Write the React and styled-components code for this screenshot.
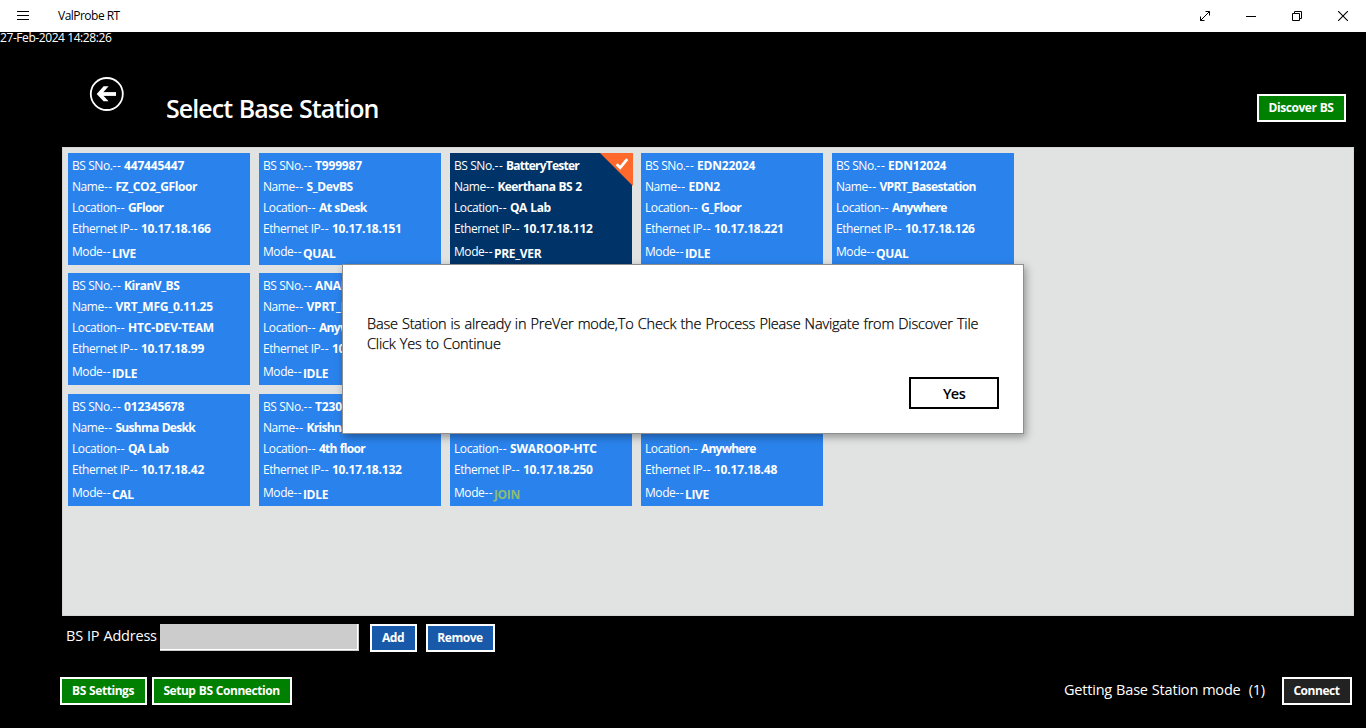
import React from "react";
import styled, { createGlobalStyle } from "styled-components";

const GlobalStyle = createGlobalStyle`
  * { box-sizing: border-box; }
  body {
    margin: 0;
    background: #000;
    color: #fff;
    font-family: "Segoe UI", "Open Sans", "Noto Sans", sans-serif;
    overflow: hidden;
  }
`;

const Window = styled.div`
  position: relative;
  display: flex;
  flex-direction: column;
  width: 1366px;
  height: 728px;
  background: #000;
`;

const TitleBar = styled.header`
  display: flex;
  align-items: center;
  height: 32px;
  padding-left: 17px;
  background: #fff;
  color: #000;
`;

const AppName = styled.span`
  flex: 1;
  margin-left: 29px;
  font-size: 12px;
  line-height: 16px;
  letter-spacing: -0.52px;
`;

const WindowControl = styled.span`
  display: flex;
  justify-content: center;
  align-items: center;
  width: 46px;
  height: 32px;
`;

const Clock = styled.div`
  height: 14px;
  font-size: 12px;
  line-height: 12px;
  letter-spacing: -0.42px;
`;

const PageHeader = styled.div`
  display: flex;
  align-items: flex-start;
  height: 101px;
  padding: 30px 20px 0 89px;
`;

const Title = styled.h1`
  flex: 1;
  margin: 14px 0 0 42px;
  font-size: 25px;
  line-height: 36px;
  font-weight: 600;
  letter-spacing: -0.95px;
  word-spacing: 1px;
`;

const Button = styled.button`
  width: ${(p) => p.$width}px;
  height: 28px;
  margin: 0 0 0 ${(p) => p.$gap || 0}px;
  padding: 0 1px 1px 0;
  border: 2px solid #fff;
  background: ${(p) => p.$color || "#008000"};
  color: #fff;
  font-family: inherit;
  font-size: 12px;
  font-weight: 700;
  line-height: 20px;
  letter-spacing: -0.45px;
  word-spacing: 0.6px;
  white-space: nowrap;
`;

const HeaderButton = styled(Button)`
  margin-top: 18px;
`;

const Panel = styled.main`
  height: 469px;
  margin: 0 12px 0 62px;
  padding: 5px;
  border: 1px solid #d5d7d6;
  background: #e1e3e2;
`;

const TileRow = styled.div`
  display: flex;
  gap: 9px;
  margin-bottom: ${(p) => p.$gap}px;
`;

const Tile = styled.section`
  position: relative;
  width: 182px;
  height: 112px;
  padding: 2px 0 0 4px;
  background: ${(p) => (p.$selected ? "#003469" : "#2a83ec")};
`;

const Field = styled.div`
  height: 21px;
  font-size: 12px;
  line-height: 21px;
  letter-spacing: -0.42px;
  white-space: pre;
`;

const ModeField = styled(Field)`
  display: flex;
  margin-top: 2px;
`;

const Dashes = styled.span`
  letter-spacing: 0.55px;
`;

const Value = styled.b`
  font-weight: 700;
  letter-spacing: ${(p) => p.$spacing}px;
  word-spacing: 0.6px;
`;

const ModeValue = styled(Value)`
  padding: 2px 0 0 0.7px;
  color: ${(p) => (p.$joining ? "#8dbd6e" : "#fff")};
`;

const SelectedMark = styled.svg`
  position: absolute;
  top: 0;
  right: -1px;
`;

const AddressRow = styled.div`
  display: flex;
  height: 61px;
  padding: 8px 0 0 66px;
`;

const Caption = styled.label`
  width: ${(p) => p.$width}px;
  font-size: 14.5px;
  line-height: 24px;
  letter-spacing: -0.2px;
  word-spacing: 0.5px;
  white-space: pre;
`;

const AddressInput = styled.input`
  width: 199px;
  height: 27px;
  border: 1px solid #ccc;
  border-width: 0 1px 1px 0;
  background: #ccc;
  box-shadow: inset -1px -1px 0 #fff;
  outline: 0;
`;

const Footer = styled.footer`
  display: flex;
  padding: 0 14px 0 60px;
`;

const Status = styled(Caption)`
  margin-left: auto;
  padding-top: 1px;
`;

const Dialog = styled.div`
  position: absolute;
  top: 264px;
  left: 342px;
  display: flex;
  flex-direction: column;
  width: 682px;
  height: 170px;
  padding: 49px 24px 24px;
  border: 1px solid #8d8f90;
  background: #fff;
  color: #000;
  box-shadow: 2px 3px 8px rgba(0, 0, 0, 0.35);
`;

const Message = styled.p`
  margin: 0;
  font-size: 14.5px;
  font-weight: 300;
  line-height: 20px;
  letter-spacing: -0.18px;
  word-spacing: 0.6px;
  white-space: nowrap;
  -webkit-text-stroke: 0.25px #000;
`;

const YesButton = styled.button`
  width: 90px;
  height: 32px;
  margin: auto 0 0 auto;
  padding: 0;
  border: 2px solid #000;
  background: #fff;
  color: #000;
  font-family: inherit;
  font-size: 14.5px;
  font-weight: 600;
  letter-spacing: -0.6px;
`;

const rows = [
  [
    ["447445447", "FZ_CO2_GFloor", "GFloor", "10.17.18.166", "LIVE"],
    ["T999987", "S_DevBS", "At sDesk", "10.17.18.151", "QUAL"],
    ["BatteryTester", "Keerthana BS 2", "QA Lab", "10.17.18.112", "PRE_VER", true],
    ["EDN22024", "EDN2", "G_Floor", "10.17.18.221", "IDLE"],
    ["EDN12024", "VPRT_Basestation", "Anywhere", "10.17.18.126", "QUAL"],
  ],
  [
    ["KiranV_BS", "VRT_MFG_0.11.25", "HTC-DEV-TEAM", "10.17.18.99", "IDLE"],
    ["ANAN", "VPRT_B", "Anyw", "10.", "IDLE"],
  ],
  [
    ["012345678", "Sushma Deskk", "QA Lab", "10.17.18.42", "CAL"],
    ["T230", "Krishna_", "4th floor", "10.17.18.132", "IDLE"],
    ["", "VPRT_DEV_", "SWAROOP-HTC", "10.17.18.250", "JOIN"],
    ["", "VPRT_", "Anywhere", "10.17.18.48", "LIVE"],
  ],
];

// Lowercase letters are set tighter than capitals and digits.
function spacingFor(text) {
  const lower = text.replace(/[^a-z]/g, "").length;
  return text ? -0.18 - (0.68 * lower) / text.length : 0;
}

function Entry({ label, value }) {
  return (
    <Field>
      {label}<Dashes>--</Dashes> <Value $spacing={spacingFor(value)}>{value}</Value>
    </Field>
  );
}

function Station({ data }) {
  const [serial, name, location, ip, mode, selected] = data;
  return (
    <Tile $selected={selected}>
      <Entry label="BS SNo." value={serial} />
      <Entry label="Name" value={name} />
      <Entry label="Location" value={location} />
      <Entry label="Ethernet IP" value={ip} />
      <ModeField>
        Mode<Dashes>--</Dashes>
        <ModeValue $spacing={-0.3} $joining={mode === "JOIN"}>{mode}</ModeValue>
      </ModeField>
      {selected && (
        <SelectedMark width="33" height="33" viewBox="0 0 33 33">
          <path d="M0 0H33V33Z" fill="#ff692c" />
          <path d="M16.7 11.2L20.2 14.7L27.2 6.2" fill="none" stroke="#fff" strokeWidth="2.8" />
        </SelectedMark>
      )}
    </Tile>
  );
}

export default function App() {
  return (
    <Window>
      <GlobalStyle />
      <TitleBar>
        <svg width="12" height="10" fill="#000" shapeRendering="crispEdges">
          <path d="M0 0H12V1H0ZM0 4H12V5H0ZM0 8H12V9H0Z" />
        </svg>
        <AppName>ValProbe RT</AppName>
        <WindowControl>
          <svg width="12" height="12" fill="none" stroke="#000">
            <path d="M1.5 10.5L10.5 1.5M6.5 1.5H10.5V5.5M1.5 6.5V10.5H5.5" />
          </svg>
        </WindowControl>
        <WindowControl>
          <svg width="10" height="2" shapeRendering="crispEdges"><path d="M0 1H10V2H0Z" /></svg>
        </WindowControl>
        <WindowControl>
          <svg width="10" height="10" fill="none" stroke="#000">
            <path d="M0.5 2.5H7.5V9.5H0.5ZM2.5 2.5V0.5H9.5V7.5H7.5" />
          </svg>
        </WindowControl>
        <WindowControl>
          <svg width="10" height="10" stroke="#000" strokeWidth="1.1">
            <path d="M0 0L10 10M10 0L0 10" />
          </svg>
        </WindowControl>
      </TitleBar>
      <Clock>27-Feb-2024 14:28:26</Clock>
      <PageHeader>
        <svg width="35" height="35" viewBox="0 0 35 35" fill="none" stroke="#fff">
          <circle cx="17.8" cy="18" r="16" strokeWidth="1.8" />
          <path d="M10 18H27" strokeWidth="3.8" />
          <path d="M7.7 18L14.6 10.3H19.6L12.8 18L19.6 25.3H14.6Z" fill="#fff" stroke="none" />
        </svg>
        <Title>Select Base Station</Title>
        <HeaderButton $width={89}>Discover BS</HeaderButton>
      </PageHeader>
      <Panel>
        {rows.map((row, i) => (
          <TileRow key={i} $gap={i === 0 ? 8 : 9}>
            {row.map((data, j) => <Station key={j} data={data} />)}
          </TileRow>
        ))}
      </Panel>
      <AddressRow>
        <Caption $width={94}>BS IP Address</Caption>
        <AddressInput />
        <Button $width={47} $gap={11} $color="#185aa9">Add</Button>
        <Button $width={69} $gap={9} $color="#185aa9">Remove</Button>
      </AddressRow>
      <Footer>
        <Button $width={87}>BS Settings</Button>
        <Button $width={140} $gap={5}>Setup BS Connection</Button>
        <Status $width={218}>Getting Base Station mode  (1)</Status>
        <Button $width={70} $color="#222">Connect</Button>
      </Footer>
      <Dialog>
        <Message>
          Base Station is already in PreVer mode,To Check the Process Please Navigate from Discover Tile
          <br />
          Click Yes to Continue
        </Message>
        <YesButton>Yes</YesButton>
      </Dialog>
    </Window>
  );
}
